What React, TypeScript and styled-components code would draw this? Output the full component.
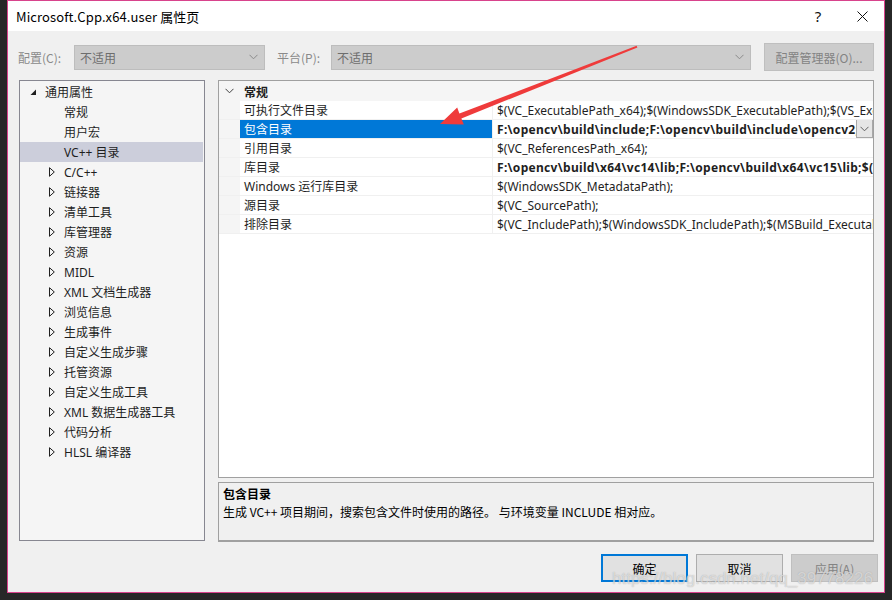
import React from "react";
import styled, { createGlobalStyle } from "styled-components";

const Global = createGlobalStyle`
  html, body { margin: 0; padding: 0; background: #272727; }
  body { font-family: "Noto Sans", "Noto Sans CJK SC", sans-serif; font-size: 12px; color: #1e1e1e; }
  * { box-sizing: border-box; }
`;

const Page = styled.div`
  position: relative;
  width: 892px;
  height: 600px;
  padding: 0 7px 0 7px;
  background: #272727;
  overflow: hidden;
`;

const Win = styled.div`
  width: 878px;
  height: 593px;
  border: 1px solid #d8438c;
  background: #f0f0f0;
  display: flex;
  flex-direction: column;
`;

const TitleBar = styled.div`
  height: 30px;
  background: #ffffff;
  display: flex;
  align-items: center;
  padding-left: 8px;
  font-size: 13px;
  color: #000;
`;

const TitleText = styled.div`
  flex: 1;
  font-family: "Noto Sans CJK SC", sans-serif;
  letter-spacing: 0.1px;
`;

const TitleBtn = styled.div`
  width: 44px;
  height: 30px;
  display: flex;
  align-items: center;
  justify-content: center;
  font-size: 15px;
  color: #111;
`;

const Toolbar = styled.div`
  margin-top: 12px;
  height: 28px;
  display: flex;
  align-items: center;
  padding-left: 10px;
`;

const Label = styled.div<{ $w: number; $ml?: number }>`
  width: ${(p) => p.$w}px;
  margin-left: ${(p) => p.$ml ?? 0}px;
  color: #8a8a8a;
  font-family: "Noto Sans CJK SC", sans-serif;
  font-size: 12px;
`;

const Combo = styled.div<{ $w: number }>`
  width: ${(p) => p.$w}px;
  height: 25px;
  background: #cccccc;
  border: 1px solid #bdbdbd;
  display: flex;
  align-items: center;
  padding-left: 5px;
  padding-right: 6px;
  color: #6d6d6d;
  font-family: "Noto Sans CJK SC", sans-serif;
`;

const ComboText = styled.div`
  flex: 1;
`;

const ToolButton = styled.div`
  margin-left: 13px;
  width: 110px;
  height: 28px;
  background: #cccccc;
  border: 1px solid #bfbfbf;
  color: #838383;
  display: flex;
  align-items: center;
  justify-content: center;
  font-family: "Noto Sans CJK SC", sans-serif;
`;

const Main = styled.div`
  margin-top: 9px;
  height: 462px;
  display: flex;
  padding-left: 11px;
  gap: 13px;
`;

const Tree = styled.div`
  width: 186px;
  height: 461px;
  background: #f5f5f5;
  border: 1px solid #878791;
  padding-top: 1px;
`;

const TreeRow = styled.div<{ $level: number; $sel?: boolean }>`
  height: 20px;
  margin: 0 1px 0 0;
  display: flex;
  align-items: center;
  padding-left: ${(p) => 10 + p.$level * 19}px;
  background: ${(p) => (p.$sel ? "#cccedb" : "transparent")};
  color: #1e1e1e;
  white-space: nowrap;
`;

const Arrow = styled.div`
  width: 15px;
  height: 20px;
  display: flex;
  align-items: center;
`;

const RightCol = styled.div`
  width: 656px;
  display: flex;
  flex-direction: column;
  gap: 4px;
`;

const Grid = styled.div`
  height: 398px;
  background: #ffffff;
  border: 1px solid #a0a0a0;
  display: flex;
  flex-direction: column;
`;

const CatRow = styled.div`
  height: 20px;
  display: flex;
  align-items: center;
  background: #f5f5f5;
`;

const Gutter = styled.div`
  width: 21px;
  height: 100%;
  background: #f5f5f5;
  display: flex;
  align-items: center;
  justify-content: center;
`;

const CatText = styled.div`
  padding-left: 4px;
  font-weight: bold;
  font-family: "Noto Sans CJK SC", sans-serif;
`;

const PropRow = styled.div`
  height: 19px;
  display: flex;
  border-bottom: 1px solid #f0f0f0;
`;

const NameCell = styled.div<{ $sel?: boolean }>`
  width: 253px;
  height: 18px;
  padding-left: 4px;
  display: flex;
  align-items: center;
  background: ${(p) => (p.$sel ? "#0078d7" : "#ffffff")};
  color: ${(p) => (p.$sel ? "#ffffff" : "#1e1e1e")};
  border-right: 1px solid #f0f0f0;
  white-space: nowrap;
  overflow: hidden;
`;

const ValueCell = styled.div<{ $bold?: boolean }>`
  flex: 1;
  height: 18px;
  padding-left: 4px;
  display: flex;
  align-items: center;
  font-weight: ${(p) => (p.$bold ? "bold" : "normal")};
  letter-spacing: ${(p) => (p.$bold ? "0.3px" : "0")};
  white-space: nowrap;
  overflow: hidden;
  position: relative;
`;

const ValText = styled.div`
  flex: 1;
  overflow: hidden;
`;

const DropBtn = styled.div`
  width: 17px;
  height: 19px;
  margin-top: -1px;
  background: #e6e6e6;
  border: 1px solid #a8a8a8;
  display: flex;
  align-items: center;
  justify-content: center;
  flex-shrink: 0;
`;

const Desc = styled.div`
  height: 60px;
  background: #f0f0f0;
  border: 1px solid #a0a0a0;
  border-bottom: 2px solid #a0a0a0;
  padding: 2px 4px;
  font-family: "Noto Sans CJK SC", sans-serif;
`;

const DescTitle = styled.div`
  font-weight: bold;
  height: 18px;
  line-height: 18px;
  color: #000;
`;

const DescText = styled.div`
  height: 18px;
  line-height: 18px;
  color: #000;
`;

const ButtonRow = styled.div`
  margin-top: 12px;
  height: 28px;
  display: flex;
  justify-content: flex-end;
  gap: 8px;
  padding-right: 6px;
`;

const Btn = styled.div<{ $kind: "primary" | "normal" | "disabled" }>`
  width: 87px;
  height: 28px;
  display: flex;
  align-items: center;
  justify-content: center;
  font-family: "Noto Sans CJK SC", sans-serif;
  background: ${(p) => (p.$kind === "disabled" ? "#cccccc" : "#e1e1e1")};
  border: ${(p) =>
    p.$kind === "primary"
      ? "2px solid #0078d7"
      : p.$kind === "disabled"
      ? "1px solid #bfbfbf"
      : "1px solid #adadad"};
  color: ${(p) => (p.$kind === "disabled" ? "#838383" : "#000")};
`;

const Overlay = styled.svg`
  position: absolute;
  left: 0;
  top: 0;
  pointer-events: none;
`;

const Watermark = styled.div`
  position: absolute;
  left: 612px;
  top: 569px;
  font-family: "Liberation Sans", sans-serif;
  font-size: 17px;
  color: rgba(255, 255, 255, 0.55);
  text-shadow: 0 0 1px rgba(120, 120, 120, 0.6);
  pointer-events: none;
  white-space: nowrap;
`;

const Chevron = ({ color = "#8a8a8a" }: { color?: string }) => (
  <svg width="9" height="6" viewBox="0 0 9 6">
    <path d="M0.5 0.8 L4.5 4.8 L8.5 0.8" fill="none" stroke={color} strokeWidth="1" />
  </svg>
);

const Expanded = () => (
  <svg width="7" height="7" viewBox="0 0 7 7">
    <path d="M6 0.5 L6 6 L0.5 6 Z" fill="#1e1e1e" />
  </svg>
);

const Collapsed = () => (
  <svg width="6" height="10" viewBox="0 0 6 10">
    <path d="M0.5 0.7 L5.3 5 L0.5 9.3 Z" fill="none" stroke="#1e1e1e" strokeWidth="1" />
  </svg>
);

const CloseIcon = () => (
  <svg width="11" height="11" viewBox="0 0 11 11">
    <path d="M0.5 0.5 L10.5 10.5 M10.5 0.5 L0.5 10.5" stroke="#111" strokeWidth="1" />
  </svg>
);

const treeItems: { label: string; level: number; kind: "exp" | "col" | "none"; sel?: boolean }[] = [
  { label: "通用属性", level: 0, kind: "exp" },
  { label: "常规", level: 1, kind: "none" },
  { label: "用户宏", level: 1, kind: "none" },
  { label: "VC++ 目录", level: 1, kind: "none", sel: true },
  { label: "C/C++", level: 1, kind: "col" },
  { label: "链接器", level: 1, kind: "col" },
  { label: "清单工具", level: 1, kind: "col" },
  { label: "库管理器", level: 1, kind: "col" },
  { label: "资源", level: 1, kind: "col" },
  { label: "MIDL", level: 1, kind: "col" },
  { label: "XML 文档生成器", level: 1, kind: "col" },
  { label: "浏览信息", level: 1, kind: "col" },
  { label: "生成事件", level: 1, kind: "col" },
  { label: "自定义生成步骤", level: 1, kind: "col" },
  { label: "托管资源", level: 1, kind: "col" },
  { label: "自定义生成工具", level: 1, kind: "col" },
  { label: "XML 数据生成器工具", level: 1, kind: "col" },
  { label: "代码分析", level: 1, kind: "col" },
  { label: "HLSL 编译器", level: 1, kind: "col" },
];

const props: { name: string; value: string; bold?: boolean; sel?: boolean }[] = [
  { name: "可执行文件目录", value: "$(VC_ExecutablePath_x64);$(WindowsSDK_ExecutablePath);$(VS_ExecutablePath);$(MSBuild_ExecutablePath)" },
  { name: "包含目录", value: "F:\\opencv\\build\\include;F:\\opencv\\build\\include\\opencv2;$(IncludePath)", bold: true, sel: true },
  { name: "引用目录", value: "$(VC_ReferencesPath_x64);" },
  { name: "库目录", value: "F:\\opencv\\build\\x64\\vc14\\lib;F:\\opencv\\build\\x64\\vc15\\lib;$(LibraryPath)", bold: true },
  { name: "Windows 运行库目录", value: "$(WindowsSDK_MetadataPath);" },
  { name: "源目录", value: "$(VC_SourcePath);" },
  { name: "排除目录", value: "$(VC_IncludePath);$(WindowsSDK_IncludePath);$(MSBuild_ExecutablePath);$(VC_LibraryPath_x64);" },
];

export default function App() {
  return (
    <Page>
      <Global />
      <Win>
        <TitleBar>
          <TitleText>Microsoft.Cpp.x64.user 属性页</TitleText>
          <TitleBtn>?</TitleBtn>
          <TitleBtn>
            <CloseIcon />
          </TitleBtn>
        </TitleBar>
        <Toolbar>
          <Label $w={56}>配置(C):</Label>
          <Combo $w={191}>
            <ComboText>不适用</ComboText>
            <Chevron />
          </Combo>
          <Label $w={54} $ml={12}>
            平台(P):
          </Label>
          <Combo $w={420}>
            <ComboText>不适用</ComboText>
            <Chevron />
          </Combo>
          <ToolButton>配置管理器(O)...</ToolButton>
        </Toolbar>
        <Main>
          <Tree>
            {treeItems.map((t) => (
              <TreeRow key={t.label} $level={t.level} $sel={t.sel}>
                <Arrow>{t.kind === "exp" ? <Expanded /> : t.kind === "col" ? <Collapsed /> : null}</Arrow>
                {t.label}
              </TreeRow>
            ))}
          </Tree>
          <RightCol>
            <Grid>
              <CatRow>
                <Gutter>
                  <Chevron color="#404040" />
                </Gutter>
                <CatText>常规</CatText>
              </CatRow>
              {props.map((p) => (
                <PropRow key={p.name}>
                  <Gutter />
                  <NameCell $sel={p.sel}>{p.name}</NameCell>
                  <ValueCell $bold={p.bold}>
                    <ValText>{p.value}</ValText>
                    {p.sel ? (
                      <DropBtn>
                        <Chevron color="#606060" />
                      </DropBtn>
                    ) : null}
                  </ValueCell>
                </PropRow>
              ))}
            </Grid>
            <Desc>
              <DescTitle>包含目录</DescTitle>
              <DescText>生成 VC++ 项目期间，搜索包含文件时使用的路径。 与环境变量 INCLUDE 相对应。</DescText>
            </Desc>
          </RightCol>
        </Main>
        <ButtonRow>
          <Btn $kind="primary">确定</Btn>
          <Btn $kind="normal">取消</Btn>
          <Btn $kind="disabled">应用(A)</Btn>
        </ButtonRow>
      </Win>
      <Overlay width="892" height="600" viewBox="0 0 892 600">
        <polygon
          points="637.4,47.6 636.6,45.8 459.4,113.6 457.2,107.6 440,124 463.8,124.4 461.4,118.4"
          fill="#ef3b3b"
        />
      </Overlay>
      <Watermark>https://blog.csdn.net/qq_39778226</Watermark>
    </Page>
  );
}
